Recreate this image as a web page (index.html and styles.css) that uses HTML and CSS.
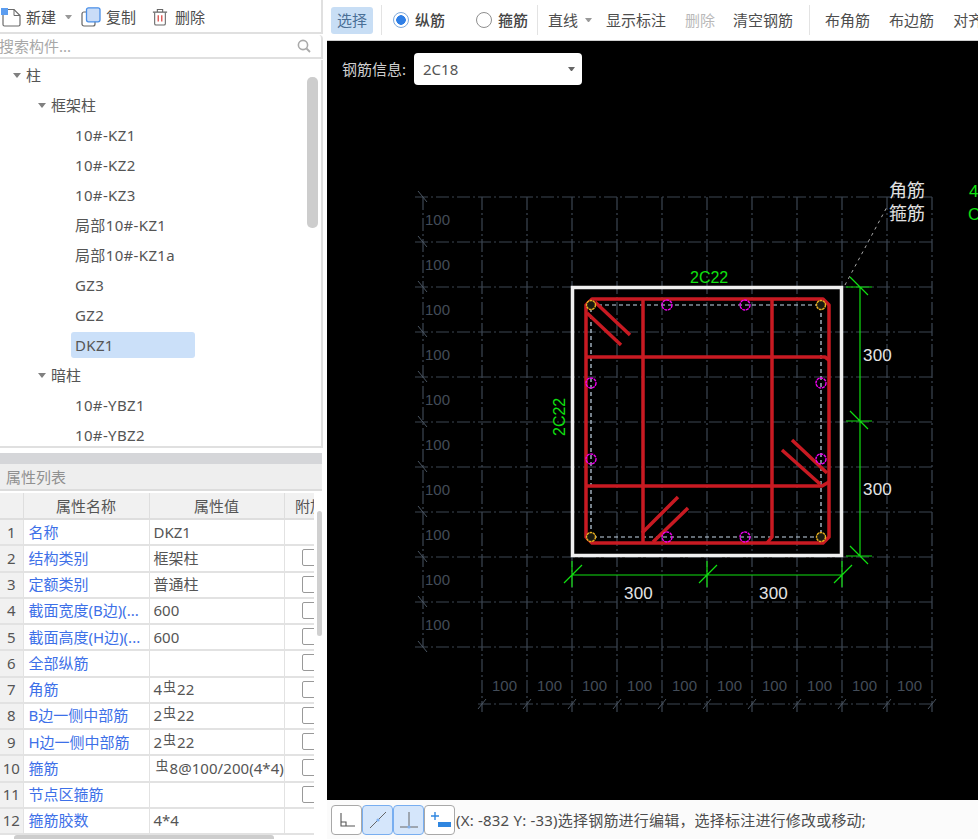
FILE: index.html
```html
<!DOCTYPE html>
<html lang="zh">
<head>
<meta charset="utf-8">
<title>钢筋编辑</title>
<link rel="stylesheet" href="styles.css">
</head>
<body>
<div class="app">
  <aside class="left">
    <div class="ltool">
      <span class="lbtn new">
        <svg width="20" height="20" viewBox="0 0 20 20"><path d="M2 2.5H13L19 8.5V17.5Q19 19 17.5 19H3.5Q2 19 2 17.5Z" fill="#fff" stroke="#6a6a6a" stroke-width="1.2"/><path d="M13 2.5V8.5H19" fill="none" stroke="#6a6a6a" stroke-width="1"/><rect x="0" y="1" width="7" height="7" fill="#5b9df0"/></svg>
        <span>新建</span>
      </span>
      <span class="caret"></span>
      <span class="lbtn copy">
        <svg width="20" height="20" viewBox="0 0 20 20"><rect x="1" y="5" width="13" height="14" rx="2" fill="#fff" stroke="#666" stroke-width="1.2"/><rect x="5.5" y="0.8" width="13.5" height="14" rx="2" fill="#c9dcf7" stroke="#4a8fe7" stroke-width="1.3"/></svg>
        <span>复制</span>
      </span>
      <span class="lbtn del">
        <svg width="16" height="20" viewBox="0 0 18 20"><path d="M3 5V17.5Q3 19 4.5 19H13.5Q15 19 15 17.5V5" fill="none" stroke="#666" stroke-width="1.2"/><path d="M1 4.5H17M6 4V1.5H12V4" fill="none" stroke="#666" stroke-width="1.2"/><path d="M7 8V15M11 8V15" stroke="#d9433f" stroke-width="1.4"/></svg>
        <span>删除</span>
      </span>
    </div>
    <div class="search">
      <span class="ph">搜索构件...</span>
      <svg width="14" height="14" viewBox="0 0 14 14"><circle cx="6" cy="6" r="4.6" fill="none" stroke="#aaa" stroke-width="1.6"/><path d="M9.5 9.5L13 13" stroke="#aaa" stroke-width="1.8"/></svg>
    </div>
    <div class="tree">
      <div class="tr l0"><i class="arr"></i>柱</div>
      <div class="tr l1"><i class="arr"></i>框架柱</div>
      <div class="tr l2"><span>10#-KZ1</span></div>
      <div class="tr l2"><span>10#-KZ2</span></div>
      <div class="tr l2"><span>10#-KZ3</span></div>
      <div class="tr l2"><span>局部10#-KZ1</span></div>
      <div class="tr l2"><span>局部10#-KZ1a</span></div>
      <div class="tr l2"><span>GZ3</span></div>
      <div class="tr l2"><span>GZ2</span></div>
      <div class="tr l2 sel"><span>DKZ1</span></div>
      <div class="tr l1"><i class="arr"></i>暗柱</div>
      <div class="tr l2"><span>10#-YBZ1</span></div>
      <div class="tr l2"><span>10#-YBZ2</span></div>
      <div class="vthumb"></div>
    </div>
    <div class="split"></div>
    <div class="phead">属性列表</div>
    <div class="pwrap">
      <div class="pclip">
      <table class="ptable">
        <colgroup><col class="col0"><col class="col1"><col class="col2"><col class="col3"></colgroup>
        <thead><tr><th></th><th>属性名称</th><th>属性值</th><th>附加</th></tr></thead>
        <tbody>
          <tr><td class="n">1</td><td class="k">名称</td><td>DKZ1</td><td></td></tr>
          <tr><td class="n">2</td><td class="k">结构类别</td><td>框架柱</td><td><i class="cb"></i></td></tr>
          <tr><td class="n">3</td><td class="k">定额类别</td><td>普通柱</td><td><i class="cb"></i></td></tr>
          <tr><td class="n">4</td><td class="k">截面宽度(B边)(...</td><td>600</td><td><i class="cb"></i></td></tr>
          <tr><td class="n">5</td><td class="k">截面高度(H边)(...</td><td>600</td><td><i class="cb"></i></td></tr>
          <tr><td class="n">6</td><td class="k">全部纵筋</td><td></td><td><i class="cb"></i></td></tr>
          <tr><td class="n">7</td><td class="k">角筋</td><td>4<sup class="g">虫</sup>22</td><td><i class="cb"></i></td></tr>
          <tr><td class="n">8</td><td class="k">B边一侧中部筋</td><td>2<sup class="g">虫</sup>22</td><td><i class="cb"></i></td></tr>
          <tr><td class="n">9</td><td class="k">H边一侧中部筋</td><td>2<sup class="g">虫</sup>22</td><td><i class="cb"></i></td></tr>
          <tr><td class="n">10</td><td class="k">箍筋</td><td class="tight"><sup class="g">虫</sup>8@100/200(4*4)</td><td><i class="cb"></i></td></tr>
          <tr><td class="n">11</td><td class="k">节点区箍筋</td><td></td><td><i class="cb"></i></td></tr>
          <tr><td class="n">12</td><td class="k">箍筋胶数</td><td>4*4</td><td></td></tr>
        </tbody>
      </table>
      </div>
      <div class="pthumb"></div>
    </div>
    <div class="hthumb"></div>
  </aside>

  <main class="right">
    <div class="rtool">
      <span class="pick">选择</span>
      <i class="sep s1"></i>
      <span class="radio on"></span><span class="rl">纵筋</span>
      <span class="radio second"></span><span class="rl">箍筋</span>
      <i class="sep s2"></i>
      <span class="line">直线</span><span class="caret cline"></span>
      <span class="ti show">显示标注</span>
      <span class="ti off">删除</span>
      <span class="ti clear">清空钢筋</span>
      <i class="sep s3"></i>
      <span class="ti a1">布角筋</span>
      <span class="ti a2">布边筋</span>
      <span class="ti a3">对齐</span>
    </div>

    <div class="canvas">
      <svg class="draw" width="651" height="759" viewBox="327 41 651 759">
        <g class="grid">
          <path d="M415 197H932M415 242H932M415 287H932M415 332H932M415 377H932M415 422H932M415 467H932M415 512H932M415 557H932M415 602H932M415 647H932"/>
          <path d="M482 197V712M527 197V712M572 197V712M617 197V712M662 197V712M707 197V712M752 197V712M797 197V712M842 197V712M887 197V712M932 197V712"/>
          <path d="M423 197V647M478 704H932"/>
        </g>
        <path class="tick" d="M418 191L427 202M418 236L427 247M418 281L427 292M418 326L427 337M418 371L427 382M418 416L427 427M418 461L427 472M418 506L427 517M418 551L427 562M418 596L427 607M418 641L427 652M478 709L486 699M523 709L531 699M568 709L576 699M613 709L621 699M658 709L666 699M703 709L711 699M748 709L756 699M793 709L801 699M838 709L846 699M883 709L891 699M928 709L936 699"/>
        <g class="dimg">
          <text x="425" y="225">100</text><text x="425" y="270">100</text><text x="425" y="315">100</text>
          <text x="425" y="360">100</text><text x="425" y="405">100</text><text x="425" y="450">100</text>
          <text x="425" y="495">100</text><text x="425" y="540">100</text><text x="425" y="585">100</text>
          <text x="425" y="630">100</text>
          <text x="492" y="691">100</text><text x="537" y="691">100</text><text x="582" y="691">100</text>
          <text x="627" y="691">100</text><text x="672" y="691">100</text><text x="717" y="691">100</text>
          <text x="762" y="691">100</text><text x="807" y="691">100</text><text x="852" y="691">100</text>
          <text x="897" y="691">100</text>
        </g>
        <rect class="col" x="572.5" y="287.5" width="269" height="268"/>
        <rect class="core" x="591" y="305" width="230" height="232"/>
        <g class="red">
          <path d="M592 299H823L829 305V537L823 543H592L586 537V305Z"/>
          <path d="M643 299V543M772 299V537L767 543M586 357H825L829 360M586 486H822L829 482"/>
          <path d="M595 302L630 335M587 313L621 345M792 440L827 473M782 450L820 484M678 497L642 533M688 508L653 542"/>
        </g>
        <g class="mag">
          <circle cx="667" cy="305" r="5"/><circle cx="745" cy="305" r="5"/>
          <circle cx="591" cy="383" r="5"/><circle cx="821" cy="383" r="5"/>
          <circle cx="591" cy="459" r="5"/><circle cx="821" cy="459" r="5"/>
          <circle cx="667" cy="537" r="5"/><circle cx="745" cy="537" r="5"/>
        </g>
        <g class="gold">
          <circle cx="591" cy="305" r="4.5"/><circle cx="821" cy="305" r="4.5"/>
          <circle cx="591" cy="537" r="4.5"/><circle cx="821" cy="537" r="4.5"/>
        </g>
        <path class="lead" d="M845 285L888 205"/>
        <path class="green" d="M860 287V556M846 287H872M846 421H872M846 556H872M850 277L868 295M850 411L868 429M850 546L868 564M572 575H842M572 561V587M707 561V587M842 561V587M564 583L582 565M699 583L717 565M834 583L852 565"/>
        <g class="dimw">
          <text x="863" y="361">300</text><text x="863" y="495">300</text>
          <text x="624" y="599">300</text><text x="759" y="599">300</text>
        </g>
        <text class="gtxt" x="690" y="283">2C22</text>
        <text class="gtxt" transform="translate(565 436) rotate(-90)">2C22</text>
        <text class="cn" x="889" y="197">角筋</text>
        <text class="cn" x="889" y="220">箍筋</text>
        <text class="gtxt2" x="969" y="197">4</text>
        <text class="gtxt2" x="968" y="220">C</text>
      </svg>
      <div class="info">
        <span class="infol">钢筋信息:</span>
        <span class="combo"><span>2C18</span><i class="caret ccombo"></i></span>
      </div>
    </div>

    <div class="status">
      <span class="sb">
        <svg width="22" height="22" viewBox="0 0 22 22"><path d="M5 4V17H19M5 13H10V17" fill="none" stroke="#555" stroke-width="1.1"/></svg>
      </span>
      <span class="sb act">
        <svg width="22" height="22" viewBox="0 0 22 22"><path d="M3 19L19 3" stroke="#666" stroke-width="1"/><circle cx="11" cy="11" r="1.6" fill="#7fb0ee"/></svg>
      </span>
      <span class="sb act">
        <svg width="24" height="22" viewBox="0 0 24 22"><path d="M12 3V18M3 18H21" stroke="#666" stroke-width="1"/><circle cx="12" cy="18" r="1.6" fill="#7fb0ee"/></svg>
      </span>
      <span class="sb">
        <svg width="24" height="22" viewBox="0 0 24 22"><path d="M7 3V11M3 7H11" stroke="#2f86e0" stroke-width="1.4"/><rect x="10" y="13" width="13" height="5" fill="#2f86e0"/></svg>
      </span>
      <span class="stext">(X: -832 Y: -33)选择钢筋进行编辑，选择标注进行修改或移动;</span>
    </div>
  </main>
</div>
</body>
</html>
```
FILE: styles.css
```css
* { box-sizing: border-box; }
html, body { margin: 0; padding: 0; }
body {
  width: 978px; height: 839px; overflow: hidden;
  background: #f4f4f4; color: #555;
  font: 15px/20px "Noto Sans", "Noto Sans CJK SC", sans-serif;
}
i { display: block; font-style: normal; }
.app { display: flex; width: 978px; height: 839px; }

/* left */
.left { width: 327px; flex: none; display: flex; flex-direction: column; position: relative; background: #fff; overflow: hidden; }
.ltool { height: 34px; width: 323px; display: flex; align-items: center; background: #fff; border-bottom: 2px solid #e0e0e0; border-right: 2px solid #e0e0e0; padding-left: 1px; padding-top: 1px; flex: none; color: #4d4d4d; }
.lbtn { display: flex; align-items: center; gap: 5px; flex: none; }
.lbtn.new { width: 62px; }
.lbtn.copy { margin-left: 6px; width: 71px; gap: 5px; }
.lbtn.del { gap: 7px; }
.caret { display: block; flex: none; width: 7px; height: 4px; border: 3.5px solid transparent; border-top: 4px solid #999; border-bottom: 0; }
.ltool .caret { margin-left: 2px; margin-right: 3px; }
.search { height: 24px; width: 323px; flex: none; display: flex; align-items: center; justify-content: space-between; padding: 0 10px 0 0; background: #fff; border-bottom: 2px solid #e0e0e0; border-right: 2px solid #e0e0e0; margin-top: 1px; border-radius: 0 4px 0 0; }
.ph { color: #a8a8a8; margin-left: -1px; }
.tree { position: relative; height: 388px; width: 323px; flex: none; overflow: hidden; background: #fff; border-bottom: 2px solid #e0e0e0; border-right: 2px solid #e0e0e0; margin-top: 1px; }
.tr { height: 30px; display: flex; align-items: center; flex: none; }
.l0 { padding-left: 13px; }
.l1 { padding-left: 38px; }
.l2 { padding-left: 71px; }
.l2 span { display: block; padding: 3px 4px; line-height: 20px; border-radius: 3px; width: 124px; white-space: nowrap; letter-spacing: .35px; }
.sel span { background: #cbe0f9; }
.arr { width: 8px; height: 5px; border: 4px solid transparent; border-top: 5px solid #808080; border-bottom: 0; margin-right: 5px; flex: none; }
.vthumb { position: absolute; left: 307px; top: 17px; width: 11px; height: 151px; background: #cdcdcd; border-radius: 5px; }
.split { height: 11px; width: 322px; flex: none; margin-top: 5px; background: #d5d6d9; }
.phead { height: 27px; width: 322px; flex: none; padding-left: 6px; line-height: 27px; background: #eeeeee; color: #909090; border-bottom: 2px solid #dcdcdc; }
.pwrap { position: relative; flex: 1; width: 322px; overflow: hidden; margin-top: 2px; background: #fff; }
.pclip { width: 314px; overflow: hidden; }
.ptable { border-collapse: collapse; table-layout: fixed; width: 336px; }
.col0 { width: 23px; } .col1 { width: 126px; } .col2 { width: 135px; } .col3 { width: 52px; }
.ptable th { height: 26px; padding: 0; font-weight: 400; text-align: center; background: #f1f1f1; border: 1px solid #dedede; border-width: 0 1px 2px 0; color: #555; white-space: nowrap; overflow: hidden; }
.ptable td { height: 26.25px; padding: 0 0 1px 4px; border: 1px solid #e2e2e2; border-width: 0 1px 2px 0; white-space: nowrap; overflow: hidden; color: #555; }
.ptable td.n { padding: 0 0 1px; text-align: center; background: #f1f1f1; }
.ptable td.k { padding-left: 5px; color: #3d70e8; }
.ptable td.tight { padding-left: 6px; letter-spacing: .05px; }
.g { font-size: 13px; line-height: 0; vertical-align: 4px; margin: 0 1px 0 1px; }
.tight .g { margin: 0 1px 0 0; }
.cb { width: 18px; height: 17px; margin-left: 13px; border: 1px solid #999; border-radius: 2px; background: #fff; }
.pthumb { position: absolute; left: 317px; top: 18px; width: 5px; height: 125px; background: #d0d0d0; border-radius: 3px; }
.hthumb { position: absolute; left: 14px; top: 835px; width: 260px; height: 6px; background: #cdcdcd; border-radius: 3px; }

/* right */
.right { flex: 1; display: flex; flex-direction: column; min-width: 0; }
.rtool { height: 41px; flex: none; position: relative; background: #fff; border-bottom: 1px solid #cfcfcf; display: flex; align-items: center; white-space: nowrap; overflow: hidden; color: #4d4d4d; }
.pick { margin-left: 4px; width: 42px; height: 27px; line-height: 27px; text-align: center; border-radius: 3px; background: #c8def5; color: #4a6f96; flex: none; }
.sep { width: 1px; height: 30px; background: #e3e3e3; flex: none; }
.s1 { margin-left: 8px; }
.radio { width: 16px; height: 16px; border-radius: 50%; border: 1px solid #8e8e8e; background: #fff; flex: none; margin-left: 11px; }
.radio.on { background: radial-gradient(circle, #2f7fe6 4.5px, #fff 5px); border-color: #7ea9dc; }
.radio.second { margin-left: 31px; }
.rl { margin-left: 6px; color: #444; font-weight: 500; flex: none; }
.s2 { margin-left: 9px; }
.line { margin-left: 10px; color: #4d4d4d; flex: none; }
.cline { margin-left: 7px; }
.ti { flex: none; }
.show { margin-left: 14px; }
.off { margin-left: 19px; color: #b9b9b9; }
.clear { margin-left: 18px; }
.s3 { margin-left: 16px; }
.a1 { margin-left: 15px; }
.a2 { margin-left: 19px; }
.a3 { margin-left: 19px; }

.canvas { position: relative; flex: 1; background: #000; min-height: 0; overflow: hidden; }
.draw { position: absolute; left: 0; top: 0; display: block; }
.info { position: relative; display: flex; align-items: center; padding: 12px 0 0 15px; height: 44px; }
.infol { color: #cfcfcf; width: 72px; flex: none; }
.combo { width: 168px; height: 32px; background: #fff; border-radius: 4px; display: flex; align-items: center; justify-content: space-between; padding: 0 7px 0 9px; color: #555; }
.ccombo { border-top-color: #666; }

.grid path { fill: none; stroke: #3d4653; stroke-width: 1.2; stroke-dasharray: 13 3 2 3; }
.tick { fill: none; stroke: #4a5562; stroke-width: 1; }
.dimg text { font: 15px "Liberation Sans", sans-serif; fill: #434c58; }
.col { fill: none; stroke: #f0f0f0; stroke-width: 3.5; }
.core { fill: none; stroke: #c5d8e8; stroke-width: 1.2; stroke-dasharray: 4 3; }
.red path { fill: none; stroke: #c81a22; stroke-width: 3.5; stroke-linejoin: round; }
.mag circle { fill: none; stroke: #f000f0; stroke-width: 1.4; stroke-dasharray: 3 .7; }
.gold circle { fill: #1a1a10; stroke: #e8b020; stroke-width: 1.4; stroke-dasharray: 2.6 .6; }
.lead { fill: none; stroke: #a8a8a8; stroke-width: 1; stroke-dasharray: 3 4; }
.green { fill: none; stroke: #10e010; stroke-width: 1.2; }
.dimw text { font: 17px "Liberation Sans", sans-serif; fill: #e4e4e4; letter-spacing: .2px; }
.gtxt { font: 16px "Liberation Sans", sans-serif; fill: #10e010; }
.gtxt2 { font: 17px "Liberation Sans", sans-serif; fill: #10e010; }
.cn { font: 18px "Noto Sans CJK SC", sans-serif; fill: #e0e0e0; }

.status { height: 39px; flex: none; display: flex; align-items: center; background: #fbfbfb; padding: 0 0 0 4px; }
.sb { width: 31px; height: 30px; flex: none; border: 1px solid #a8a8a8; border-radius: 4px; background: #fff; display: flex; align-items: center; justify-content: center; }
.sb.act { background: #d5e6fb; border-color: #78aef0; }
.stext { margin-left: 1px; color: #4d4d4d; white-space: nowrap; letter-spacing: .2px; }
```
